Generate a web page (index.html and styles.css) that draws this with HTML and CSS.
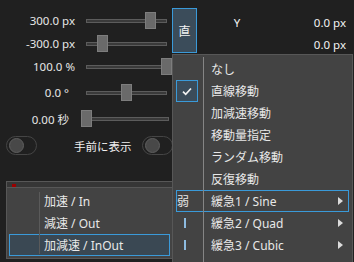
FILE: index.html
```html
<!DOCTYPE html>
<html lang="ja">
<head>
  <meta charset="UTF-8">
  <title>移動設定</title>
  <link rel="stylesheet" href="styles.css">
</head>
<body>

  <div class="page">
    <div class="left">
      <div class="lbl">300.0 px</div>
      <div class="sl"><div class="track"></div><div class="thumb" style="left:69px"></div></div>

      <div class="lbl">-300.0 px</div>
      <div class="sl"><div class="track"></div><div class="thumb" style="left:21px"></div></div>

      <div class="lbl">100.0 %</div>
      <div class="sl"><div class="track"></div><div class="thumb" style="left:85px"></div></div>

      <div class="lbl short">0.0 °</div>
      <div class="sl"><div class="track"></div><div class="thumb" style="left:45px"></div></div>

      <div class="lbl short">0.00 秒</div>
      <div class="sl wide"><div class="track"></div><div class="thumb" style="left:5px"></div></div>

      <div class="toggles">
        <span class="tog"><i></i></span>
        <span class="tglabel">手前に表示</span>
        <span class="tog"><i></i></span>
      </div>
    </div>

    <div class="right">
      <div class="kbtn">直</div>
      <div class="axis">Y</div>
      <div class="val">0.0 px</div>
      <div class="axis"></div>
      <div class="val">0.0 px</div>
    </div>
  </div>

  <!-- 移動方法メニュー -->
  <div class="menu">
    <div class="item"><span class="ico"></span><span class="txt">なし</span></div>
    <div class="item"><span class="ico chk"><svg width="10" height="9" viewBox="0 0 10 9"><path d="M1 4.6 L3.7 7.3 L9 1.5" fill="none" stroke="#f2f2f2" stroke-width="1.7"/></svg></span><span class="txt">直線移動</span></div>
    <div class="item"><span class="ico"></span><span class="txt">加減速移動</span></div>
    <div class="item"><span class="ico"></span><span class="txt">移動量指定</span></div>
    <div class="item"><span class="ico"></span><span class="txt">ランダム移動</span></div>
    <div class="item"><span class="ico"></span><span class="txt">反復移動</span></div>
    <div class="item hover"><span class="ico lv">弱</span><span class="txt">緩急1 / Sine</span><span class="arr"></span></div>
    <div class="item"><span class="ico lv"><b class="bar"></b></span><span class="txt">緩急2 / Quad</span><span class="arr"></span></div>
    <div class="item"><span class="ico lv"><b class="bar"></b></span><span class="txt">緩急3 / Cubic</span><span class="arr"></span></div>
  </div>

  <!-- サブメニュー -->
  <div class="sub">
    <div class="sub-head"><span class="dot"></span></div>
    <div class="sub-body">
      <div class="item"><span class="ico"></span><span class="txt">加速 / In</span></div>
      <div class="item"><span class="ico"></span><span class="txt">減速 / Out</span></div>
      <div class="item sel"><span class="ico"></span><span class="txt">加減速 / InOut</span></div>
    </div>
  </div>

</body>
</html>
```

FILE: styles.css
```css
body {
  margin: 0;
  background: #202020;
  color: #e6e6e6;
  font-family: "Noto Sans", "Noto Sans CJK JP", sans-serif;
  font-size: 11.5px;
  width: 354px;
  height: 262px;
  overflow: hidden;
  position: relative;
}

.page {
  display: flex;
}

.left {
  width: 172px;
  padding-top: 9px;
  display: grid;
  grid-template-columns: 76px 96px;
  grid-template-rows: 23px 23px 23px 29px 23px 31px;
}

.lbl {
  display: flex;
  align-items: center;
  justify-content: flex-end;
  padding-right: 1px;
  white-space: nowrap;
}

.lbl.short {
  padding-right: 7px;
}

.sl {
  position: relative;
  display: flex;
  align-items: center;
}

.track {
  margin-left: 10px;
  width: 81px;
  height: 4px;
  box-sizing: border-box;
  border: 1px solid #5c5c5c;
  background: #3a3a3a;
}

.sl.wide .track {
  margin-left: 15px;
  width: 78px;
}

.thumb {
  position: absolute;
  top: 50%;
  margin-top: -9px;
  width: 11px;
  height: 17px;
  box-sizing: border-box;
  background: #6a6a6a;
  border: 1px solid #7d7d7d;
}

.toggles {
  grid-column: 1 / -1;
  display: flex;
  align-items: center;
  padding-left: 6px;
}

.tog {
  width: 31px;
  height: 19px;
  box-sizing: border-box;
  border: 1px solid #454545;
  border-radius: 10px;
  display: flex;
  align-items: center;
  padding-left: 2px;
  flex: none;
}

.tog i {
  width: 15px;
  height: 15px;
  box-sizing: border-box;
  border-radius: 50%;
  background: #484848;
  border: 1px solid #5e5e5e;
}

.tglabel {
  margin-left: 37px;
  margin-right: 11px;
  width: 57px;
  white-space: nowrap;
  color: #f0f0f0;
}

.right {
  flex: 1;
  display: grid;
  grid-template-columns: 25px 80px 1fr;
  grid-template-rows: 22px 22px;
  padding-top: 11px;
  padding-right: 8px;
}

.kbtn {
  grid-row: 1 / 3;
  margin-top: -3px;
  height: 45px;
  box-sizing: border-box;
  background: #3b4c5a;
  border: 1px solid #3a9ad9;
  display: flex;
  align-items: center;
  justify-content: center;
  font-size: 12px;
  color: #f2f2f2;
}

.axis {
  display: flex;
  align-items: center;
  justify-content: center;
  color: #f2f2f2;
}

.val {
  display: flex;
  align-items: center;
  justify-content: flex-end;
  color: #f2f2f2;
}

/* メニュー */
.menu {
  position: absolute;
  left: 172px;
  top: 54px;
  width: 181px;
  height: 215px;
  box-sizing: border-box;
  border: 1px solid #575757;
  background: #434343;
  padding: 3px 3px;
  font-size: 12px;
}

.menu::before {
  content: "";
  position: absolute;
  left: 30px;
  top: 2px;
  bottom: 0;
  width: 1px;
  background: #858585;
}

.item {
  height: 22px;
  display: flex;
  align-items: center;
  white-space: nowrap;
  color: #e8e8e8;
}

.item.hover {
  box-shadow: inset 0 0 0 1px #3a9ad9;
}

.ico {
  width: 22px;
  height: 22px;
  flex: none;
  display: flex;
  align-items: center;
  justify-content: center;
}

.ico.chk {
  background: #3b4c5a;
  box-shadow: inset 0 0 0 1px #3a9ad9;
}

.ico.lv {
  justify-content: flex-start;
  padding-left: 1px;
  box-sizing: border-box;
}

.bar {
  margin-left: 7px;
  width: 2px;
  height: 10px;
  background: #8dbbe0;
}

.txt {
  margin-left: 13px;
}

.arr {
  margin-left: auto;
  margin-right: 6px;
  width: 0;
  height: 0;
  border-left: 5px solid #dcdcdc;
  border-top: 4px solid transparent;
  border-bottom: 4px solid transparent;
}

/* サブメニュー */
.sub {
  position: absolute;
  left: 6px;
  top: 181px;
  width: 167px;
  box-sizing: border-box;
  border: 1px solid #575757;
  background: #434343;
  font-size: 12px;
}

.sub-head {
  height: 5px;
  background: #363636;
  border-bottom: 1px solid #575757;
  display: flex;
}

.dot {
  margin: 2px 0 0 5px;
  width: 4px;
  height: 3px;
  background: #9a0000;
}

.sub-body {
  position: relative;
  padding: 2px;
}

.sub-body::after {
  content: "";
  position: absolute;
  left: 32px;
  top: 4px;
  bottom: 4px;
  width: 1px;
  background: #5a5a5a;
}

.item.sel {
  background: #3a4853;
  box-shadow: inset 0 0 0 1px #3a9ad9;
}
```
